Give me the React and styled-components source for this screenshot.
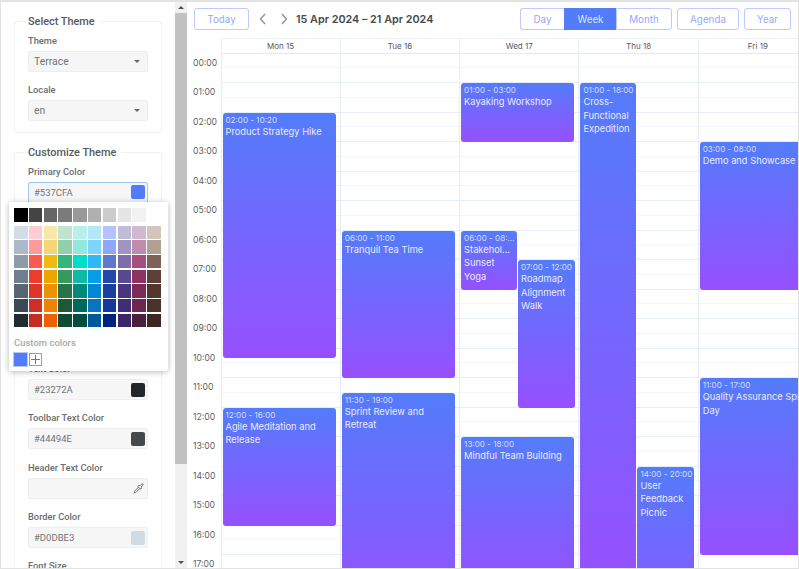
import React from "react"
import styled, { createGlobalStyle } from "styled-components"
import { Pipette } from "lucide-react"

const HOUR = 29.5
const PRIMARY = "#537cfa"

const GlobalStyle = createGlobalStyle`
  html, body {
    margin: 0;
    padding: 0;
    height: 100%;
    overflow: hidden;
    background: #fff;
  }
  * {
    box-sizing: border-box;
  }
`

const Frame = styled.div`
  display: flex;
  width: 799px;
  height: 569px;
  overflow: hidden;
  border: 1px solid #e2e2e2;
  border-top-width: 2px;
`

const Sidebar = styled.aside`
  position: relative;
  flex: 0 0 174px;
  height: 100%;
  overflow: hidden;
  padding: 11px 13px 0;
  font-family: Roboto, "Liberation Sans", sans-serif;
`

const Group = styled.fieldset`
  margin: 0 0 11px;
  padding: 4px 13px 0;
  border: 1px solid #f1f1f1;
  border-radius: 3px;
  min-width: 0;
`

const GroupTitle = styled.legend`
  padding: 0 5px 0 0;
  margin-left: 0;
  font-size: 10.9px;
  line-height: 17px;
  font-weight: 500;
  color: #55595e;
`

const Field = styled.div`
  margin-bottom: 12.3px;

  &:last-child {
    margin-bottom: 10.7px;
  }
`

const Label = styled.div`
  font-size: 9.3px;
  line-height: 12px;
  font-weight: 500;
  color: #6a6d71;
  margin: 1px 0 4px;
`

const InputBox = styled.div`
  display: flex;
  align-items: center;
  justify-content: space-between;
  width: 120px;
  height: 21px;
  padding: 0 2px 0 5px;
  background: #f6f6f6;
  border: 1px solid ${(p) => (p.$focused ? "#9cc8f2" : "#eeeeee")};
  border-radius: 2px;
  font-size: ${(p) => (p.$select ? "10.4px" : "9.5px")};
  color: #707377;
`

const Swatch = styled.span`
  width: 14px;
  height: 14px;
  border-radius: 2px;
  background: ${(p) => p.$color};
`

const Caret = styled.span`
  width: 0;
  height: 0;
  margin-right: 5px;
  border-left: 3px solid transparent;
  border-right: 3px solid transparent;
  border-top: 3px solid #66696d;
`

const PipetteIcon = styled(Pipette)`
  margin: 0 1px 0 auto;
  color: #66696d;
`

const Popup = styled.div`
  position: absolute;
  left: 8px;
  top: 200px;
  width: 159px;
  height: 169px;
  padding: 6px 6px 0 5px;
  background: #fff;
  box-shadow: 0 1px 6px rgba(0, 0, 0, 0.28);
  border-radius: 2px;
`

const SwatchRow = styled.div`
  display: grid;
  grid-template-columns: repeat(${(p) => p.$cols}, 13.5px);
  column-gap: 1.3px;
  row-gap: 1.2px;
  margin-bottom: 4px;
`

const ColorCell = styled.div`
  height: 13.5px;
  background: ${(p) => p.$color};
`

const CustomLabel = styled.div`
  margin-top: 10px;
  font-size: 9.5px;
  line-height: 12px;
  color: #a9a9a9;
  font-weight: 500;
`

const CustomRow = styled.div`
  display: flex;
  gap: 2px;
  margin-top: 4px;
`

const CustomColor = styled.div`
  width: 13px;
  height: 13px;
  background: ${PRIMARY};
  outline: 1px solid #b9c8f5;
`

const AddColor = styled.div`
  display: flex;
  align-items: center;
  justify-content: center;
  width: 13px;
  height: 13px;
  border: 1px solid #9c9c9c;
  color: #777;
`

const Scrollbar = styled.div`
  display: flex;
  flex-direction: column;
  flex: 0 0 12px;
  height: 100%;
  background: #f1f1f1;
`

const ScrollArrow = styled.div`
  display: flex;
  align-items: center;
  justify-content: center;
  height: 11px;
  flex: none;

  &::after {
    content: "";
    border-left: 3px solid transparent;
    border-right: 3px solid transparent;
    ${(p) => (p.$down ? "border-top" : "border-bottom")}: 3px solid #505050;
  }
`

const ScrollThumb = styled.div`
  height: 451px;
  flex: none;
  background: #c1c1c1;
`

const ScrollSpace = styled.div`
  flex: 1;
`

const Calendar = styled.main`
  flex: 1;
  min-width: 0;
  height: 100%;
  overflow: hidden;
  font-family: Inter, "Liberation Sans", sans-serif;
  color: #44494e;
`

const Toolbar = styled.div`
  display: flex;
  align-items: center;
  height: 36px;
  padding: 6px 7px 8px 7px;
  width: 611px;
`

const ToolButton = styled.button`
  height: 22px;
  width: ${(p) => p.$w}px;
  margin-left: ${(p) => p.$ml || 0}px;
  padding: 0;
  font: 400 9.8px Inter, "Liberation Sans", sans-serif;
  color: ${(p) => (p.$active ? "#dfe6ff" : "#93a9fb")};
  background: ${(p) => (p.$active ? PRIMARY : "#fff")};
  border: 1px solid ${(p) => (p.$active ? PRIMARY : "#bccafd")};
  border-radius: 3px;
`

const Segments = styled.div`
  display: flex;
  margin-left: auto;

  ${ToolButton} {
    border-radius: 0;
    border-right-width: 0;
  }
  ${ToolButton}:first-child {
    border-radius: 3px 0 0 3px;
  }
  ${ToolButton}:last-child {
    border-radius: 0 3px 3px 0;
    border-right-width: 1px;
  }
`

const NavIcon = styled.svg`
  width: 8px;
  height: 12px;
  margin-left: ${(p) => p.$ml}px;
  fill: none;
  stroke: #8a8e92;
  stroke-width: 1.3;
`

const Title = styled.div`
  margin-left: 8px;
  font-size: 10.8px;
  font-weight: 600;
  white-space: nowrap;
`

const HeaderRow = styled.div`
  display: grid;
  grid-template-columns: 33.5px repeat(7, 119.3px);
  height: 15.5px;
`

const DayHead = styled.div`
  display: flex;
  align-items: center;
  justify-content: center;
  font-size: 8px;
  color: #55595e;
  border-top: 1px solid #ecf1f5;
  border-left: 1px solid #ecf1f5;
  border-bottom: 1px solid #e4eaf0;
`

const Grid = styled.div`
  display: grid;
  grid-template-columns: 33.5px repeat(7, 119.3px);
`

const TimeCell = styled.div`
  height: ${HOUR}px;
  padding: 3px 0 0 6px;
  font-size: 8.6px;
  line-height: 12px;
  color: #5b5f64;
`

const DayColumn = styled.div`
  position: relative;
  border-left: 1px solid #e6edf3;
`

const Slot = styled.div`
  height: ${HOUR / 2}px;
  border-bottom: 1px solid ${(p) => (p.$hourEnd ? "#e6edf3" : "#f2f6f9")};
`

const Event = styled.div`
  position: absolute;
  overflow: hidden;
  padding: 2px 1px 0 3px;
  border-radius: 3px;
  background: linear-gradient(180deg, ${PRIMARY} 0%, #974fff 100%);
  color: #e8eaff;
`

const EventTime = styled.div`
  font-size: 8.1px;
  line-height: 11px;
  white-space: nowrap;
  overflow: hidden;
  text-overflow: ellipsis;
  color: #d7dcff;
`

const EventName = styled.div`
  font-size: 9.3px;
  line-height: 13.5px;
  margin-top: -1px;
`

const TopSwatches = ["#000000", "#444444", "#666666", "#7b7b7b", "#999999", "#b0b0b0", "#cccccc", "#e5e5e5", "#f2f2f2"]

const GridSwatches = [
  "#d5dce5", "#ffccd1", "#fbe6a9", "#bfe3cd", "#b9efe8", "#b4e8f9", "#b4c3ff", "#c2bcdb", "#d3b9cd", "#d3c4bc",
  "#adb8c9", "#ff9a9a", "#f5d576", "#90d0aa", "#92e8dc", "#80d4fb", "#8fa7f9", "#a094c5", "#c08cae", "#b1a094",
  "#8e9bab", "#f95c4f", "#f2b90f", "#34b67a", "#00dec6", "#2db8fa", "#5f79ce", "#7f6cad", "#a64e7c", "#7d6357",
  "#6f7f8f", "#eb3f2e", "#eda600", "#38985e", "#11b8a3", "#069ee8", "#2447ac", "#594a90", "#8e3360", "#5d4037",
  "#5a6572", "#df3527", "#ee9102", "#29734a", "#008a7a", "#0288d1", "#1a3fa3", "#4a3680", "#7b2d58", "#53372f",
  "#3d4856", "#cf2e22", "#ef8107", "#1c5a36", "#00695c", "#0b74c0", "#1338a0", "#3f2d78", "#6e2850", "#4c322a",
  "#212b34", "#c52d22", "#ee6002", "#0e4b33", "#004d40", "#01579b", "#002380", "#3a2768", "#4a1f3c", "#3e2723",
]

const colorFields = [
  { label: "Primary Color", value: "#537CFA", color: PRIMARY, focused: true },
  { label: "Secondary Color", value: "#974FFF", color: "#974fff" },
  { label: "Background Color", value: "#FFFFFF", color: "#ffffff" },
  { label: "Accent Color", value: "#F2F6F9", color: "#f2f6f9" },
  { label: "Text Color", value: "#23272A", color: "#23272a" },
  { label: "Toolbar Text Color", value: "#44494E", color: "#44494e" },
  { label: "Header Text Color", value: "", picker: true },
  { label: "Border Color", value: "#D0DBE3", color: "#d0dbe3" },
  { label: "Font Size", value: "14px" },
]

const days = [
  {
    name: "Mon 15",
    events: [
      { time: "02:00 - 10:20", title: "Product Strategy Hike", start: 2, end: 10.33, left: 1, width: 113 },
      { time: "12:00 - 16:00", title: "Agile Meditation and Release", start: 12, end: 16, left: 1, width: 113 },
    ],
  },
  {
    name: "Tue 16",
    events: [
      { time: "06:00 - 11:00", title: "Tranquil Tea Time", start: 6, end: 11, left: 1, width: 113 },
      { time: "11:30 - 19:00", title: "Sprint Review and Retreat", start: 11.5, end: 19, left: 1, width: 113 },
    ],
  },
  {
    name: "Wed 17",
    events: [
      { time: "01:00 - 03:00", title: "Kayaking Workshop", start: 1, end: 3, left: 1, width: 113 },
      { time: "06:00 - 08:00", title: "Stakehol... Sunset Yoga", start: 6, end: 8, left: 1, width: 55.5 },
      { time: "07:00 - 12:00", title: "Roadmap Alignment Walk", start: 7, end: 12, left: 58, width: 57 },
      { time: "13:00 - 18:00", title: "Mindful Team Building", start: 13, end: 18, left: 1, width: 113 },
    ],
  },
  {
    name: "Thu 18",
    events: [
      { time: "01:00 - 18:00", title: "Cross-Functional Expedition", start: 1, end: 18, left: 1, width: 56 },
      { time: "14:00 - 20:00", title: "User Feedback Picnic", start: 14, end: 20, left: 58, width: 57 },
    ],
  },
  {
    name: "Fri 19",
    events: [
      { time: "03:00 - 08:00", title: "Demo and Showcase", start: 3, end: 8, left: 1, width: 118 },
      { time: "11:00 - 17:00", title: "Quality Assurance Sprint Day", start: 11, end: 17, left: 1, width: 118 },
    ],
  },
  { name: "Sat 20", events: [] },
  { name: "Sun 21", events: [] },
]

const hours = Array.from({ length: 24 }, (_, i) => i)

const App = () => (
  <>
    <GlobalStyle />
    <Frame>
      <Sidebar>
        <Group>
          <GroupTitle>Select Theme</GroupTitle>
          <Field>
            <Label>Theme</Label>
            <InputBox $select>
              Terrace
              <Caret />
            </InputBox>
          </Field>
          <Field>
            <Label>Locale</Label>
            <InputBox $select>
              en
              <Caret />
            </InputBox>
          </Field>
        </Group>
        <Group>
          <GroupTitle>Customize Theme</GroupTitle>
          {colorFields.map((field) => (
            <Field key={field.label}>
              <Label>{field.label}</Label>
              <InputBox $focused={field.focused}>
                {field.value}
                {field.color && <Swatch $color={field.color} />}
                {field.picker && <PipetteIcon size={11} />}
              </InputBox>
            </Field>
          ))}
        </Group>
        <Popup>
          <SwatchRow $cols={9}>
            {TopSwatches.map((color) => (
              <ColorCell key={color} $color={color} />
            ))}
          </SwatchRow>
          <SwatchRow $cols={10}>
            {GridSwatches.map((color) => (
              <ColorCell key={color} $color={color} />
            ))}
          </SwatchRow>
          <CustomLabel>Custom colors</CustomLabel>
          <CustomRow>
            <CustomColor />
            <AddColor>
              <svg width="9" height="9" viewBox="0 0 9 9" stroke="#777" strokeWidth="1">
                <path d="M4.5 0v9M0 4.5h9" />
              </svg>
            </AddColor>
          </CustomRow>
        </Popup>
      </Sidebar>
      <Scrollbar>
        <ScrollArrow />
        <ScrollThumb />
        <ScrollSpace />
        <ScrollArrow $down />
      </Scrollbar>
      <Calendar>
        <Toolbar>
          <ToolButton $w={55}>Today</ToolButton>
          <NavIcon $ml={10} viewBox="0 0 8 12">
            <path d="M6 1L1.5 6 6 11" />
          </NavIcon>
          <NavIcon $ml={13} viewBox="0 0 8 12">
            <path d="M2 1l4.5 5L2 11" />
          </NavIcon>
          <Title>15 Apr 2024 – 21 Apr 2024</Title>
          <Segments>
            <ToolButton $w={44}>Day</ToolButton>
            <ToolButton $w={52} $active>
              Week
            </ToolButton>
            <ToolButton $w={56}>Month</ToolButton>
          </Segments>
          <ToolButton $w={62} $ml={5}>
            Agenda
          </ToolButton>
          <ToolButton $w={47} $ml={5}>
            Year
          </ToolButton>
        </Toolbar>
        <HeaderRow>
          <div />
          {days.map((day) => (
            <DayHead key={day.name}>{day.name}</DayHead>
          ))}
        </HeaderRow>
        <Grid>
          <div>
            {hours.map((h) => (
              <TimeCell key={h}>{`${String(h).padStart(2, "0")}:00`}</TimeCell>
            ))}
          </div>
          {days.map((day) => (
            <DayColumn key={day.name}>
              {hours.map((h) => (
                <React.Fragment key={h}>
                  <Slot />
                  <Slot $hourEnd />
                </React.Fragment>
              ))}
              {day.events.map((ev) => (
                <Event
                  key={ev.title}
                  style={{
                    top: ev.start * HOUR,
                    height: (ev.end - ev.start) * HOUR,
                    left: ev.left,
                    width: ev.width,
                  }}
                >
                  <EventTime>{ev.time}</EventTime>
                  <EventName>{ev.title}</EventName>
                </Event>
              ))}
            </DayColumn>
          ))}
        </Grid>
      </Calendar>
    </Frame>
  </>
)

export default App
